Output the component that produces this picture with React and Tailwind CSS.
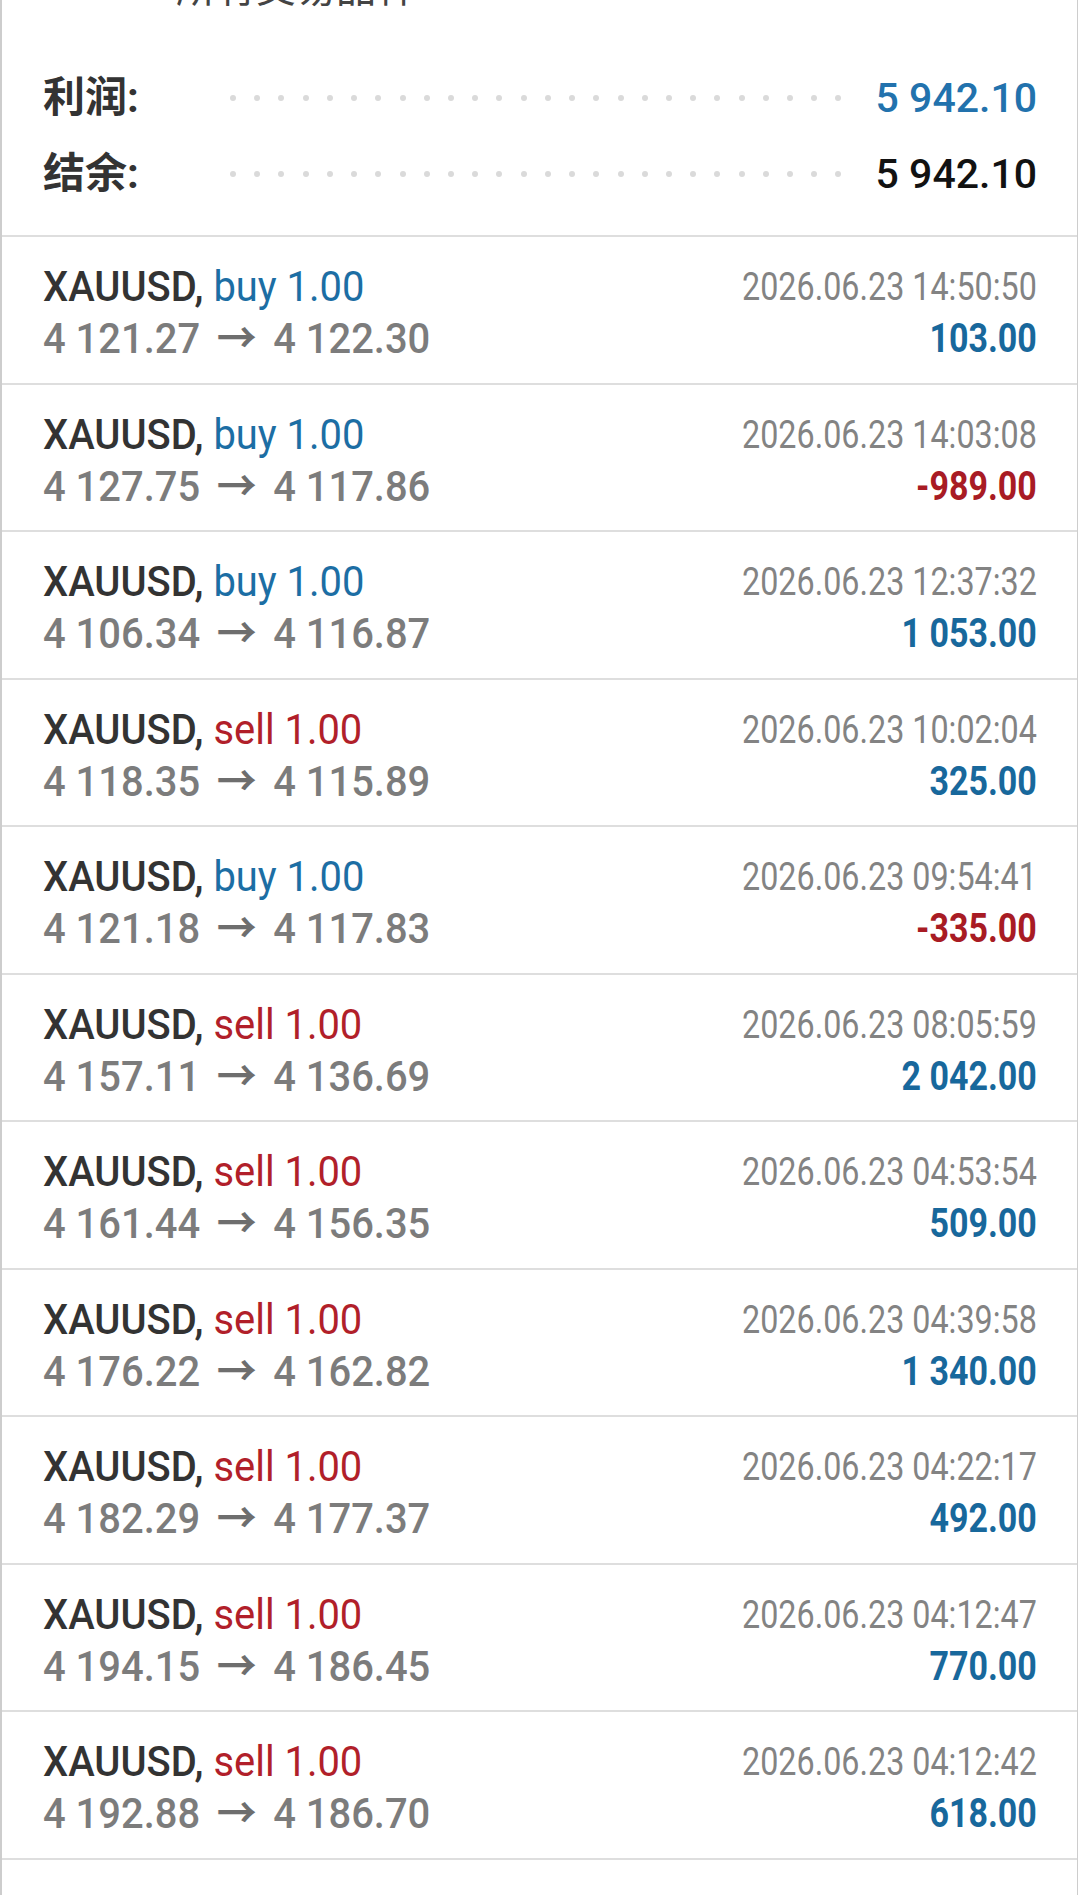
import React from "react";

const trades = [
  { side: "buy", open: "4 121.27", close: "4 122.30", time: "14:50:50", profit: "103.00" },
  { side: "buy", open: "4 127.75", close: "4 117.86", time: "14:03:08", profit: "-989.00" },
  { side: "buy", open: "4 106.34", close: "4 116.87", time: "12:37:32", profit: "1 053.00" },
  { side: "sell", open: "4 118.35", close: "4 115.89", time: "10:02:04", profit: "325.00" },
  { side: "buy", open: "4 121.18", close: "4 117.83", time: "09:54:41", profit: "-335.00" },
  { side: "sell", open: "4 157.11", close: "4 136.69", time: "08:05:59", profit: "2 042.00" },
  { side: "sell", open: "4 161.44", close: "4 156.35", time: "04:53:54", profit: "509.00" },
  { side: "sell", open: "4 176.22", close: "4 162.82", time: "04:39:58", profit: "1 340.00" },
  { side: "sell", open: "4 182.29", close: "4 177.37", time: "04:22:17", profit: "492.00" },
  { side: "sell", open: "4 194.15", close: "4 186.45", time: "04:12:47", profit: "770.00" },
  { side: "sell", open: "4 192.88", close: "4 186.70", time: "04:12:42", profit: "618.00" },
];

const Dots = () => (
  <div className="flex-1 flex items-center justify-between">
    {Array.from({ length: 26 }).map((_, i) => (
      <span key={i} className="w-[6px] h-[6px] rounded-full bg-[#dadada]"></span>
    ))}
  </div>
);

const SummaryRow = ({ label, value, valueClass }) => (
  <div className="h-[76px] flex items-center">
    <div className="w-[187px] text-[42px] font-bold text-[#333333] leading-none">{label}</div>
    <Dots />
    <div className={`pl-[34px] text-[41px] font-medium leading-none ${valueClass}`}>{value}</div>
  </div>
);

const TradeRow = ({ trade }) => {
  const isBuy = trade.side === "buy";
  const negative = trade.profit.startsWith("-");
  return (
    <div className="flex justify-between pl-[41px] pr-[40px] pt-[24px] pb-[17.5px] border-b-2 border-[#dedede]">
      <div className="origin-left scale-x-[0.95] whitespace-nowrap">
        <div className="h-[52px] leading-[52px] text-[42px]">
          <span className="font-medium text-[#333333]">XAUUSD,</span>{" "}
          <span className={isBuy ? "text-[#1c6ea4]" : "text-[#b11f2a]"}>
            {trade.side} 1.00
          </span>
        </div>
        <div className="h-[52px] leading-[52px] text-[42px] font-medium text-[#7c7c7c]">
          {trade.open}
          <span className="inline-block w-[77px] text-center text-[42px] font-bold text-[#6e6e6e]">→</span>
          {trade.close}
        </div>
      </div>
      <div className="origin-right scale-x-[0.85] text-right whitespace-nowrap">
        <div className="h-[52px] leading-[52px] text-[38px] text-[#838383]">
          2026.06.23 {trade.time}
        </div>
        <div
          className={`h-[52px] leading-[52px] text-[40px] font-bold ${
            negative ? "text-[#a81b24]" : "text-[#18689c]"
          }`}
        >
          {trade.profit}
        </div>
      </div>
    </div>
  );
};

export default function App() {
  return (
    <div className="w-[1080px] h-[1895px] bg-white overflow-hidden font-['Roboto','Noto_Sans_CJK_SC',sans-serif]">
      <div className="h-full mr-[2px] border-l-2 border-r-[1.5px] border-[#cdcdcd]">
        <div className="border-b-2 border-[#dedede] pb-[23px]">
          <div className="h-[9px] overflow-hidden flex items-end pl-[174px]">
            <span className="text-[40px] leading-none text-[#444444]">所有交易品种</span>
          </div>
          <div className="mt-[51px] pl-[41px] pr-[40px]">
            <SummaryRow label="利润:" value="5 942.10" valueClass="text-[#2272ad]" />
            <SummaryRow label="结余:" value="5 942.10" valueClass="text-[#121212]" />
          </div>
        </div>
        {trades.map((t, i) => (
          <TradeRow key={i} trade={t} />
        ))}
      </div>
    </div>
  );
}
